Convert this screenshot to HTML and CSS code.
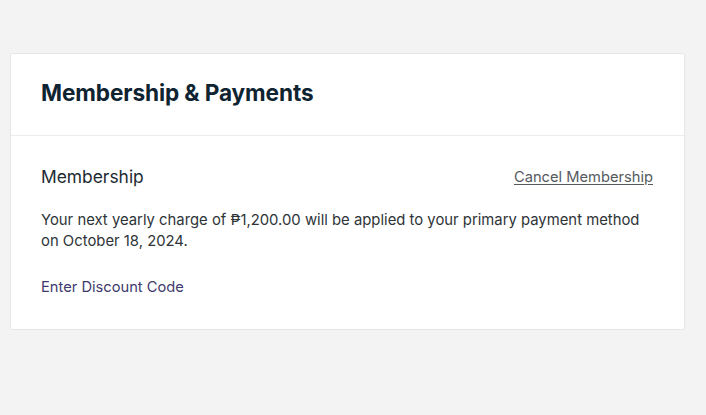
FILE: index.html
```html
<!DOCTYPE html>
<html lang="en">
<head>
<meta charset="utf-8">
<link rel="stylesheet" href="styles.css">
</head>
<body>
<main class="page">
  <section class="card">
    <header class="card-header">
      <h1 class="title">Membership &amp; Payments</h1>
    </header>
    <div class="card-body">
      <div class="row">
        <h2 class="label">Membership</h2>
        <a class="cancel" href="#">Cancel Membership</a>
      </div>
      <p class="desc">Your next yearly charge of ₱1,200.00 will be applied to your primary payment method on October 18, 2024.</p>
      <a class="discount" href="#">Enter Discount Code</a>
    </div>
  </section>
</main>
</body>
</html>
```
FILE: styles.css
```css
html, body {
  margin: 0;
  padding: 0;
  background: #f3f3f3;
}
body {
  font-family: "Inter", "Liberation Sans", sans-serif;
  color: #1f2a30;
}
.page {
  padding: 53px 21px 0 10px;
}
.card {
  background: #fff;
  border: 1px solid #e6e6e6;
  border-radius: 2px;
}
.card-header {
  padding: 23px 30px 26px;
  border-bottom: 1px solid #ececec;
}
.title {
  margin: 0;
  font-size: 22.6px;
  line-height: 32px;
  font-weight: 700;
  color: #0f2330;
  letter-spacing: -0.1px;
}
.card-body {
  padding: 29px 31px 32px 30px;
}
.row {
  display: flex;
  justify-content: space-between;
  align-items: center;
}
.label {
  margin: 0;
  font-size: 17.4px;
  font-weight: 400;
  line-height: 24px;
  color: #1c2a33;
}
.cancel {
  font-size: 14.7px;
  color: #555a5e;
  text-decoration: underline;
  text-underline-offset: 2px;
}
.desc {
  margin: 21px 0 0;
  font-size: 14.85px;
  line-height: 21px;
  color: #2e3438;
}
.discount {
  display: inline-block;
  margin-top: 25px;
  font-size: 14.7px;
  line-height: 20px;
  color: #3f3a6e;
  text-decoration: none;
}
```
